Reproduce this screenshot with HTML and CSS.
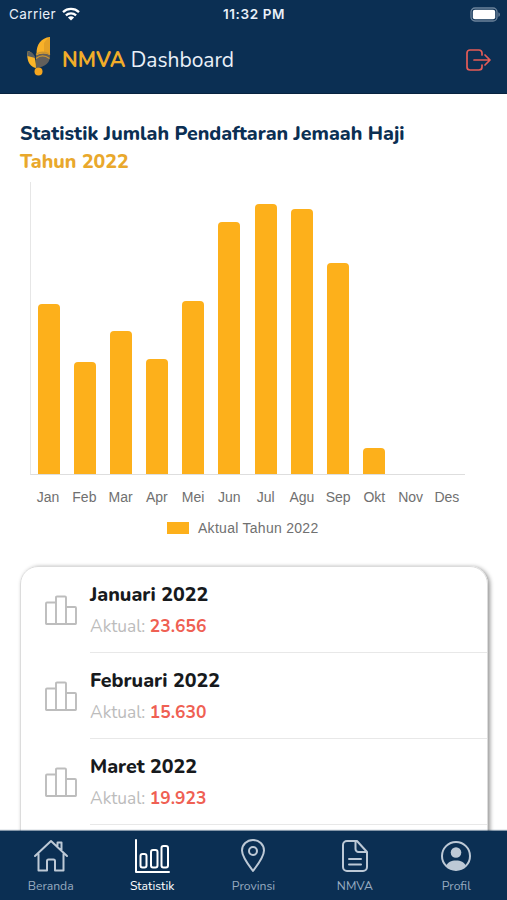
FILE: index.html
```html
<!DOCTYPE html>
<html lang="id">
  <head>
    <meta charset="UTF-8" />
    <meta name="viewport" content="width=device-width, initial-scale=1.0" />
    <title>NMVA Dashboard</title>
    <link rel="stylesheet" href="styles.css">
  </head>
  <body>
    <header>
      <div class="statusbar">
        <div class="carrier">
          <span>Carrier</span>
          <svg width="18" height="14" viewBox="0 0 18 14" fill="none" stroke="#fff" stroke-width="2.3">
            <path d="M1 5.1c4.500-4.200 11.500-4.200 16 0M3.900 8.300c2.900-2.700 7.300-2.700 10.200 0" />
            <path d="M9 13.500L5.900 10.400c1.700-1.700 4.500-1.700 6.200 0z" fill="#fff" stroke="none" />
          </svg>
        </div>
        <span class="time">11:32 PM</span>
        <svg class="battery" width="31" height="15" viewBox="0 0 31 15">
          <rect x="1" y="1" width="26" height="13" rx="4" fill="none" stroke="#6c839b" stroke-width="1.300" />
          <rect x="2.800" y="2.800" width="22.400" height="9.400" rx="2" fill="#fff" />
          <path d="M28.400 5.200c2 .8 2 3.800 0 4.600z" fill="#6c839b" />
        </svg>
      </div>
      <div class="titlebar">
        <svg class="logo" width="24" height="40" viewBox="0 0 24 40">
          <path d="M23 1C14 2 9.500 8 9.500 18v3c4-3 9-3 13.500-1z" fill="#f9b128" />
          <path d="M17 7c2-3 4-5 6-6v16h-6z" fill="#e5a126" />
          <path d="M.8 15c5 1 8.200 6 8.200 17C2 31-1 23 .8 15z" fill="#fcb528" />
          <path d="M.8 15c4 1 6.500 3 7.500 7l-8-2z" fill="#596064" />
          <path d="M9 20c4-3 9-3 14-1 .5 7-4 12-14 13z" fill="#625f5b" />
          <path d="M9 18.500c4-3 9-3 14 0M9 22.500c4-3.300 9-3.300 13.500 0" fill="none" stroke="#c99431" stroke-width="1.400" />
          <circle cx="11.500" cy="35.500" r="4" fill="#f5a61f" />
        </svg>
        <h1><b>NMVA</b> Dashboard</h1>
        <svg class="logout" width="26" height="22" viewBox="0 0 26 22" fill="none" stroke="#e65c57" stroke-width="1.700" stroke-linecap="round" stroke-linejoin="round">
          <path d="M16 6V4a3 3 0 0 0-3-3H4a3 3 0 0 0-3 3v14a3 3 0 0 0 3 3h9a3 3 0 0 0 3-3v-2M8 11h15.500M19 6l5 5-5 5" />
        </svg>
      </div>
    </header>

    <main>
      <h2 class="judul">Statistik Jumlah Pendaftaran Jemaah Haji</h2>
      <h3 class="tahun">Tahun 2022</h3>

      <section class="chart">
        <div class="bars">
          <div class="bar" style="height: 170.5px"></div>
          <div class="bar" style="height: 112px"></div>
          <div class="bar" style="height: 143.5px"></div>
          <div class="bar" style="height: 115.5px"></div>
          <div class="bar" style="height: 173px"></div>
          <div class="bar" style="height: 252px"></div>
          <div class="bar" style="height: 270px"></div>
          <div class="bar" style="height: 265px"></div>
          <div class="bar" style="height: 211px"></div>
          <div class="bar" style="height: 26px"></div>
          <div class="bar" style="height: 0px"></div>
          <div class="bar" style="height: 0px"></div>
        </div>
        <div class="labels">
          <span>Jan</span><span>Feb</span><span>Mar</span><span>Apr</span><span>Mei</span><span>Jun</span><span>Jul</span><span>Agu</span><span>Sep</span><span>Okt</span><span>Nov</span><span>Des</span>
        </div>
        <div class="legend"><i></i><span>Aktual Tahun 2022</span></div>
      </section>

      <section class="list">
        <article>
          <svg class="icon" width="32" height="30" viewBox="0 0 32 30"><path d="M1 28.500V8.500q0-1 1-1h9v-5q0-1 1-1h8q1 0 1 1v9.500h9q1 0 1 1v15.500q0 .5-.5.5H1.500q-.5 0-.5-.5zM11 7.500V29M21 12v17" /></svg>
          <div class="tekst">
            <h4>Januari 2022</h4>
            <p>Aktual: <b>23.656</b></p>
          </div>
        </article>
        <article>
          <svg class="icon" width="32" height="30" viewBox="0 0 32 30"><path d="M1 28.500V8.500q0-1 1-1h9v-5q0-1 1-1h8q1 0 1 1v9.500h9q1 0 1 1v15.500q0 .5-.5.5H1.500q-.5 0-.5-.5zM11 7.500V29M21 12v17" /></svg>
          <div class="tekst">
            <h4>Februari 2022</h4>
            <p>Aktual: <b>15.630</b></p>
          </div>
        </article>
        <article>
          <svg class="icon" width="32" height="30" viewBox="0 0 32 30"><path d="M1 28.500V8.500q0-1 1-1h9v-5q0-1 1-1h8q1 0 1 1v9.500h9q1 0 1 1v15.500q0 .5-.5.5H1.500q-.5 0-.5-.5zM11 7.500V29M21 12v17" /></svg>
          <div class="tekst">
            <h4>Maret 2022</h4>
            <p>Aktual: <b>19.923</b></p>
          </div>
        </article>
      </section>
    </main>

    <nav class="navigation">
      <a>
        <svg width="36" height="36" viewBox="0 0 36 36"><path d="M2 18L18 3l16 15M5.500 16v16.500h8.500V23q0-1.500 1.500-1.500h5q1.500 0 1.500 1.500v9.500h8.500V16M24.500 8V4.500h4V12" /></svg>
        <span>Beranda</span>
      </a>
      <a class="valgt">
        <svg width="36" height="36" viewBox="0 0 36 36"><path d="M2 2v32h33" /><rect x="6.500" y="16" width="6" height="13.500" rx="2" /><rect x="17" y="12" width="6.500" height="17.500" rx="2" /><rect x="27.500" y="8" width="6.500" height="21.500" rx="2" /></svg>
        <span>Statistik</span>
      </a>
      <a>
        <svg width="36" height="36" viewBox="0 0 36 36"><path d="M18 33C15 29 7 19 7 12.500a11 10.500 0 0 1 22 0C29 19 21 29 18 33z" /><circle cx="18" cy="13" r="4" /></svg>
        <span>Provinsi</span>
      </a>
      <a>
        <svg width="36" height="36" viewBox="0 0 36 36"><path d="M20 3H10a4 4 0 0 0-4 4v22a4 4 0 0 0 4 4h16a4 4 0 0 0 4-4V14zM18.500 3v8a3 3 0 0 0 3 3h8.500M12 21h12M12 26.500h12" /></svg>
        <span>NMVA</span>
      </a>
      <a>
        <svg width="36" height="36" viewBox="0 0 36 36"><circle cx="18" cy="18" r="14" /><g class="fyld"><circle cx="18" cy="14.500" r="5.300" /><path d="M8 28c2-4 5-5.500 10-5.500S26 24 28 28c-5 5.500-15 5.500-20 0z" /></g></svg>
        <span>Profil</span>
      </a>
    </nav>
  </body>
</html>
```

FILE: styles.css
```css
* {
  margin: 0;
  padding: 0;
  box-sizing: border-box;
}

body {
  height: 100vh;
  display: flex;
  flex-direction: column;
  overflow: hidden;
  background-color: #fff;
  font-family: Nunito, Lato, sans-serif;
}

svg {
  display: block;
}

/* ---------HEADER------------*/

header {
  height: 94px;
  flex: none;
  background-color: #0b2f53;
  border-bottom: 1px solid #08233f;
  color: #e9f0f8;
}

.statusbar {
  height: 28px;
  padding: 0 6px 0 9px;
  display: grid;
  grid-template-columns: 1fr auto 1fr;
  align-items: center;
  font-family: Inter, sans-serif;
  font-size: 13.5px;
}

.carrier {
  display: flex;
  align-items: center;
  gap: 6px;
  letter-spacing: 0.4px;
}

.time {
  margin-right: 2px;
  font-weight: 600;
  letter-spacing: 0.6px;
}

.battery {
  justify-self: end;
}

.titlebar {
  height: 63px;
  padding: 0 15px 0 27px;
  display: flex;
  align-items: center;
}

.logo {
  margin-bottom: 7px;
}

.titlebar h1 {
  margin-left: 11px;
  flex: 1;
  font-size: 21px;
  font-weight: 400;
}

.titlebar h1 b {
  color: #f2ad29;
}

/* ---------STATISTIK------------*/

main {
  flex: 1;
  min-height: 0;
  overflow: hidden;
  padding: 26px 19px 0 20px;
}

.judul,
.tahun {
  font-size: 19.55px;
  line-height: 28px;
  font-weight: 800;
  white-space: nowrap;
}

.judul {
  color: #0b2f53;
}

.tahun {
  color: #e9a82c;
}

.chart {
  margin: 6px 0 0 10px;
  width: 435px;
  color: #707070;
  font-family: "Liberation Sans", sans-serif;
  font-size: 14px;
}

.bars {
  height: 293px;
  display: grid;
  grid-template-columns: repeat(12, 1fr);
  align-items: end;
  justify-items: center;
  padding-right: 1px;
  border-left: 1px solid #e6e6e6;
  border-bottom: 1px solid #dedede;
}

.bar {
  width: 22px;
  background-color: #fdb01b;
  border-radius: 4px 4px 0 0;
}

.labels {
  display: grid;
  grid-template-columns: repeat(12, 1fr);
  padding-top: 14px;
  line-height: 16px;
  text-align: center;
}

.legend {
  display: flex;
  align-items: center;
  gap: 9px;
  padding: 14px 0 1px 137px;
  line-height: 18px;
  letter-spacing: 0.28px;
}

.legend i {
  width: 22px;
  height: 12px;
  background-color: #fdb01b;
}

/* ---------LISTE------------*/

.list {
  margin-top: 28px;
  height: 400px;
  border: 1px solid #dcdcdc;
  border-radius: 18px;
  box-shadow: 2px 1px 4px #0000006b;
}

article {
  height: 86px;
  padding-left: 24px;
  display: flex;
}

.icon {
  margin-top: 28px;
  fill: none;
  stroke: #bdbdbd;
  stroke-width: 1.9;
}

.tekst {
  flex: 1;
  margin-left: 13px;
  padding-top: 12px;
  border-bottom: 1px solid #e8e8e8;
}

.tekst h4 {
  font-size: 19.6px;
  line-height: 31px;
  font-weight: 800;
  color: #171a1d;
}

.tekst p {
  padding-top: 2px;
  font-size: 17.4px;
  line-height: 28px;
  color: #bcbcbc;
}

.tekst b {
  color: #ef6053;
}

/* ---------NAVIGATION------------*/

.navigation {
  height: 69px;
  flex: none;
  display: grid;
  grid-template-columns: repeat(5, 1fr);
  padding-top: 7px;
  background-color: #0b2f53;
  box-shadow: 0 -1px 1px #0b2f5380;
  position: relative;
}

.navigation a {
  display: flex;
  flex-direction: column;
  align-items: center;
  color: #97abc0;
  font-size: 12.2px;
  line-height: 24px;
}

.navigation svg {
  fill: none;
  stroke: #bdc9d6;
  stroke-width: 2;
  stroke-linejoin: round;
  stroke-linecap: round;
}

.navigation .fyld {
  fill: #bdc9d6;
  stroke: none;
}

.navigation .valgt {
  color: #fff;
}

.navigation .valgt svg {
  stroke: #fff;
}
```
